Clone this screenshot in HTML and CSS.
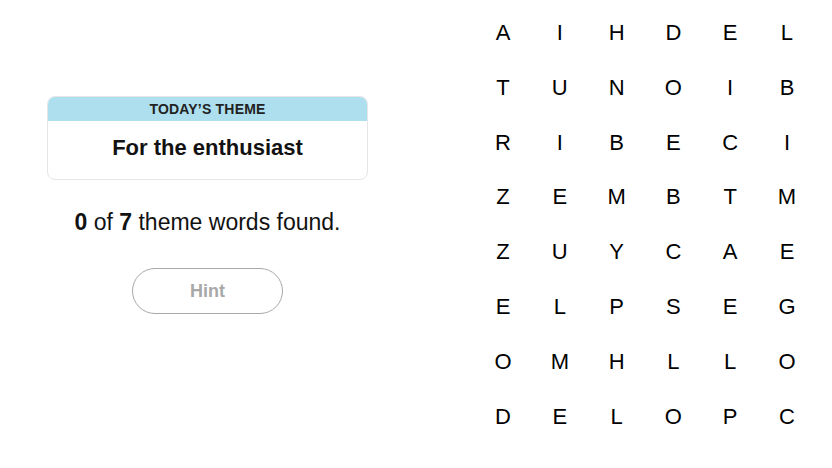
FILE: index.html
```html
<!DOCTYPE html>
<html lang="en">
<head>
<meta charset="utf-8">
<title>Strands</title>
<link rel="stylesheet" href="styles.css">
</head>
<body>
<main class="game">
  <section class="info">
    <div class="theme-card">
      <div class="theme-label">TODAY’S THEME</div>
      <div class="theme-title">For the enthusiast</div>
    </div>
    <p class="progress"><b>0</b> of <b>7</b> theme words found.</p>
    <button class="hint" type="button">Hint</button>
  </section>
  <section class="board">
    <span>A</span><span>I</span><span>H</span><span>D</span><span>E</span><span>L</span>
    <span>T</span><span>U</span><span>N</span><span>O</span><span>I</span><span>B</span>
    <span>R</span><span>I</span><span>B</span><span>E</span><span>C</span><span>I</span>
    <span>Z</span><span>E</span><span>M</span><span>B</span><span>T</span><span>M</span>
    <span>Z</span><span>U</span><span>Y</span><span>C</span><span>A</span><span>E</span>
    <span>E</span><span>L</span><span>P</span><span>S</span><span>E</span><span>G</span>
    <span>O</span><span>M</span><span>H</span><span>L</span><span>L</span><span>O</span>
    <span>D</span><span>E</span><span>L</span><span>O</span><span>P</span><span>C</span>
  </section>
</main>
</body>
</html>
```
FILE: styles.css
```css
* { box-sizing: border-box; }
html, body {
  margin: 0;
  padding: 0;
  background: #fff;
}
body {
  font-family: "Liberation Sans", Arial, sans-serif;
  color: #121212;
  width: 832px;
  height: 468px;
  overflow: hidden;
}
.game {
  display: flex;
  align-items: flex-start;
}
.info {
  width: 415px;
  padding-top: 96px;
  display: flex;
  flex-direction: column;
  align-items: center;
}
.theme-card {
  width: 321px;
  border: 1px solid #e6e6e6;
  border-radius: 8px;
  overflow: hidden;
  text-align: center;
}
.theme-label {
  background: #aedfee;
  height: 24px;
  line-height: 24px;
  font-size: 14px;
  font-weight: 700;
  color: #222;
  letter-spacing: 0.2px;
}
.theme-title {
  height: 58px;
  line-height: 54px;
  font-size: 22px;
  font-weight: 700;
  color: #121212;
}
.progress {
  margin: 29px 0 0;
  height: 26px;
  line-height: 26px;
  font-size: 23px;
  color: #121212;
}
.hint {
  margin-top: 33px;
  width: 151px;
  height: 46px;
  border: 1.5px solid #a8a8a8;
  border-radius: 23px;
  background: #fff;
  font-family: "Liberation Sans", Arial, sans-serif;
  font-size: 18px;
  font-weight: 700;
  color: #a8a8a8;
  padding: 0;
}
.board {
  margin-left: 59.6px;
  margin-top: 5.6px;
  display: grid;
  grid-template-columns: repeat(6, 56.8px);
  grid-auto-rows: 54.8px;
}
.board span {
  display: flex;
  align-items: center;
  justify-content: center;
  font-size: 22px;
  color: #000;
  line-height: 1;
}
```
